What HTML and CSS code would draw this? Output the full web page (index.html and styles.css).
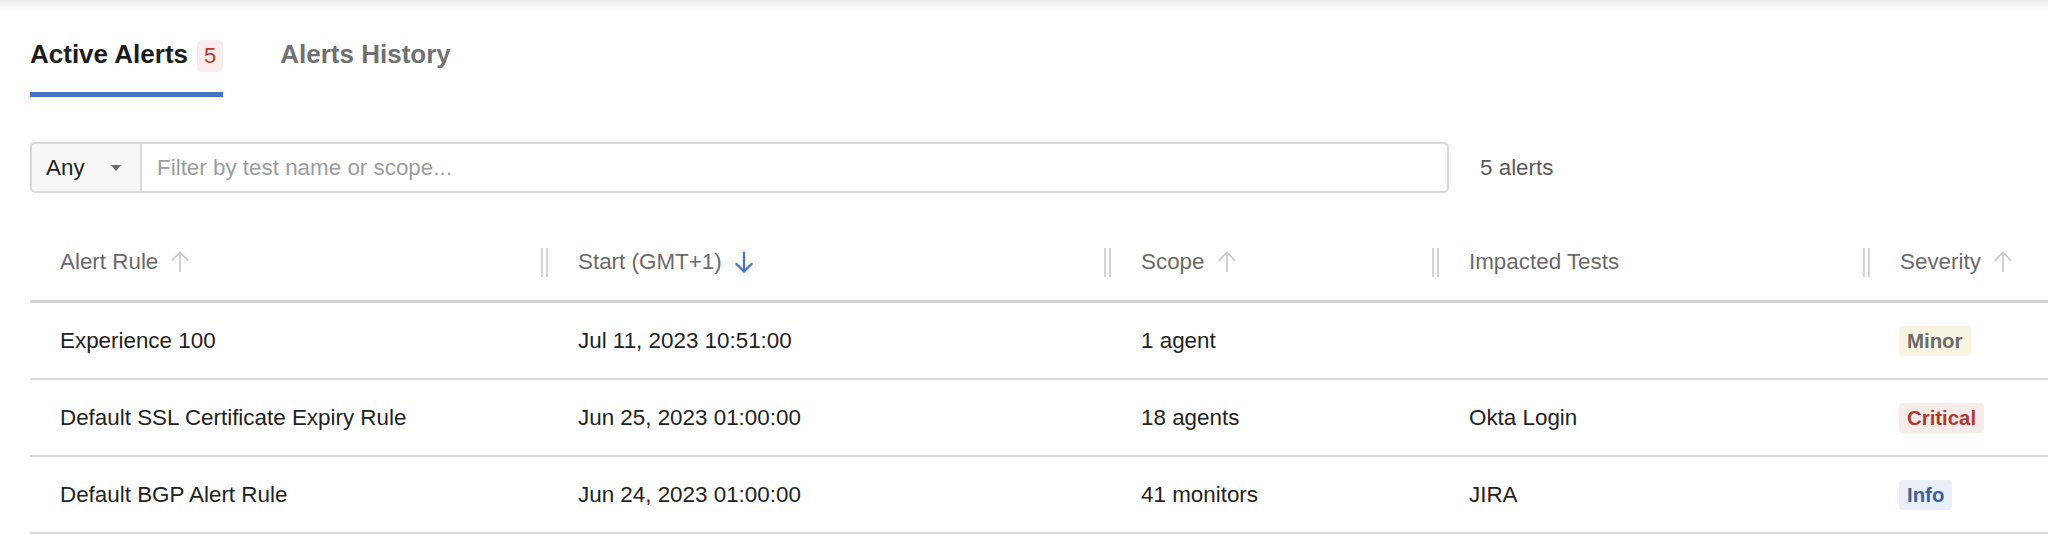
FILE: index.html
```html
<!DOCTYPE html>
<html lang="en">
<head>
<meta charset="utf-8">
<title>Active Alerts</title>
<link rel="stylesheet" href="styles.css">
</head>
<body>
<div class="topshade"></div>
<main class="page">
  <nav class="tabs">
    <div class="tab tab-active"><span>Active Alerts</span><span class="count">5</span></div>
    <div class="tab"><span>Alerts History</span></div>
  </nav>

  <div class="toolbar">
    <div class="filter">
      <div class="select"><span>Any</span><span class="caret"></span></div>
      <div class="search">Filter by test name or scope...</div>
    </div>
    <div class="total">5 alerts</div>
  </div>

  <div class="table">
    <div class="row head">
      <div class="th"><span>Alert Rule</span><svg class="sort" viewBox="0 0 20 22" width="20" height="22"><path d="M10 1.5V21M1.8 9.7L10 1.5l8.2 8.2" fill="none" stroke="#c9c9c9" stroke-width="1.7"/></svg><span class="handle"></span></div>
      <div class="th"><span>Start (GMT+1)</span><svg class="sort" viewBox="0 0 20 22" width="20" height="22"><path d="M10 1V20.5M1.8 12.3l8.2 8.2 8.2-8.2" fill="none" stroke="#4a74c2" stroke-width="2.3"/></svg><span class="handle"></span></div>
      <div class="th"><span>Scope</span><svg class="sort" viewBox="0 0 20 22" width="20" height="22"><path d="M10 1.5V21M1.8 9.7L10 1.5l8.2 8.2" fill="none" stroke="#c9c9c9" stroke-width="1.7"/></svg><span class="handle"></span></div>
      <div class="th"><span>Impacted Tests</span><span class="handle"></span></div>
      <div class="th"><span>Severity</span><svg class="sort" viewBox="0 0 20 22" width="20" height="22"><path d="M10 1.5V21M1.8 9.7L10 1.5l8.2 8.2" fill="none" stroke="#c9c9c9" stroke-width="1.7"/></svg></div>
    </div>
    <div class="row">
      <div class="td">Experience 100</div>
      <div class="td">Jul 11, 2023 10:51:00</div>
      <div class="td">1 agent</div>
      <div class="td"></div>
      <div class="td"><span class="sev sev-minor">Minor</span></div>
    </div>
    <div class="row">
      <div class="td">Default SSL Certificate Expiry Rule</div>
      <div class="td">Jun 25, 2023 01:00:00</div>
      <div class="td">18 agents</div>
      <div class="td">Okta Login</div>
      <div class="td"><span class="sev sev-critical">Critical</span></div>
    </div>
    <div class="row">
      <div class="td">Default BGP Alert Rule</div>
      <div class="td">Jun 24, 2023 01:00:00</div>
      <div class="td">41 monitors</div>
      <div class="td">JIRA</div>
      <div class="td"><span class="sev sev-info">Info</span></div>
    </div>
  </div>
</main>
</body>
</html>
```

FILE: styles.css
```css
html, body {
  margin: 0;
  padding: 0;
  background: #ffffff;
  overflow: hidden;
}

body {
  font-family: "Liberation Sans", Arial, Helvetica, sans-serif;
  font-size: 22.4px;
  color: #222222;
}

.topshade {
  height: 10px;
  background: linear-gradient(#ebebeb, #ffffff);
}

.page {
  padding-left: 30px;
}

/* Tabs */
.tabs {
  display: flex;
  gap: 57px;
  margin-top: 26px;
}

.tab {
  display: flex;
  align-items: center;
  gap: 9px;
  font-size: 26px;
  font-weight: bold;
  line-height: 32px;
  color: #717171;
  padding-bottom: 20px;
  border-bottom: 5px solid transparent;
}

.tab-active {
  color: #1b1b1b;
  border-bottom-color: #4673c1;
}

.count {
  margin-top: 4px;
  height: 32px;
  line-height: 32px;
  padding: 0 7px;
  border-radius: 5px;
  background: #f9ecea;
  color: #b23a2e;
  font-size: 22px;
  font-weight: normal;
}

/* Toolbar */
.toolbar {
  display: flex;
  align-items: center;
  gap: 31px;
  margin-top: 45px;
}

.filter {
  display: flex;
  width: 1419px;
  height: 51px;
  box-sizing: border-box;
  border: 2px solid #d9d9d9;
  border-radius: 5px;
  overflow: hidden;
}

.select {
  display: flex;
  align-items: center;
  width: 110px;
  box-sizing: border-box;
  padding-left: 14px;
  background: #f6f6f6;
  border-right: 2px solid #dcdcdc;
  color: #1f1f1f;
}

.caret {
  margin-left: 26px;
  width: 0;
  height: 0;
  border-left: 5.5px solid transparent;
  border-right: 5.5px solid transparent;
  border-top: 6px solid #6a6a6a;
}

.search {
  display: flex;
  align-items: center;
  padding-left: 15px;
  color: #9c9c9c;
  flex: 1;
}

.total {
  color: #5a5a5a;
}

/* Table */
.table {
  margin-top: 31px;
}

.row {
  display: grid;
  grid-template-columns: 518px 563px 328px 431px 1fr;
  height: 77px;
  box-sizing: border-box;
  border-bottom: 2px solid #dadada;
}

.row.head {
  height: 79px;
  border-bottom: 3px solid #d4d4d4;
}

.th {
  display: flex;
  align-items: center;
  padding-left: 30px;
  color: #6a6a6a;
}

.sort {
  margin-left: 12px;
  flex: none;
}

.handle {
  margin-left: auto;
  width: 7px;
  height: 29px;
  box-sizing: border-box;
  border-left: 2px solid #d3d3d3;
  border-right: 2px solid #d3d3d3;
}

.td {
  display: flex;
  align-items: center;
  padding-left: 30px;
  color: #222222;
  white-space: nowrap;
}

.sev {
  margin-left: -1px;
  height: 30px;
  line-height: 30px;
  padding: 0 8px;
  border-radius: 4px;
  font-size: 20.4px;
  font-weight: bold;
}

.sev-minor {
  background: #f8f4e2;
  color: #6b6b6b;
}

.sev-critical {
  background: #f8ecea;
  color: #b03a2e;
}

.sev-info {
  background: #e8eff8;
  color: #3e5f9f;
}
```
